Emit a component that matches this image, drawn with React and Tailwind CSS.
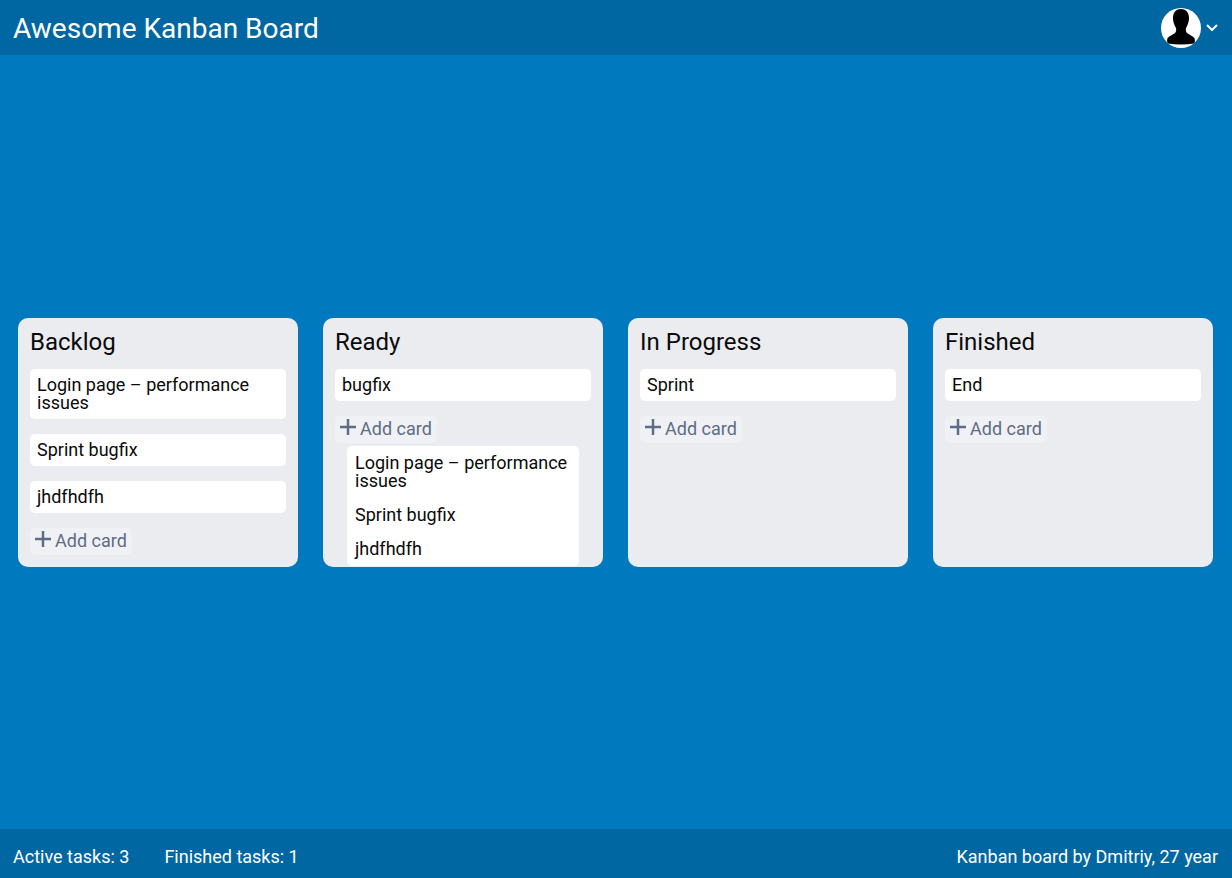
const columns = [
  { title: "Backlog", cards: ["Login page – performance issues", "Sprint bugfix", "jhdfhdfh"] },
  { title: "Ready", cards: ["bugfix"], dropdown: ["Login page – performance issues", "Sprint bugfix", "jhdfhdfh"] },
  { title: "In Progress", cards: ["Sprint"] },
  { title: "Finished", cards: ["End"] },
];

const Avatar = () => (
  <div className="w-10 h-10 rounded-full bg-white overflow-hidden">
    <svg viewBox="0 0 40 40" className="w-10 h-10">
      <path
        d="M20 1C14.500 1 12 5 12 10C12 14 13.500 17.500 15 20C15.500 22 15 24 14 25C12.500 26.500 8.500 27.500 6.500 30C6 32 6 33.500 6.500 35.500Q20 37.500 33.500 35.500C34 33.500 34 32 33.500 30C31.500 27.500 27.500 26.500 26 25C25 24 24.500 22 25 20C26.500 17.500 28 14 28 10C28 5 25.500 1 20 1Z"
        fill="#000"
      />
    </svg>
  </div>
);

const Column = ({ title, cards, dropdown }) => (
  <div className="flex-1 flex flex-col bg-[#ebecf0] rounded-[10px] p-3 text-[#0a0a0a]">
    <h2 className="text-[24px] leading-6 mb-[15px]">{title}</h2>
    <div className="flex flex-col gap-[15px]">
      {cards.map((card, index) => (
        <div key={index} className="bg-white rounded-[5px] p-[7px] text-[18px] leading-[18px]">
          {card}
        </div>
      ))}
    </div>
    <button className="self-start mt-[15px] h-[27px] w-[102px] flex items-center pl-[5px] pb-[2px] rounded-[5px] bg-[#f0f1f4] text-[18px] text-[#5e6c84]">
      <svg viewBox="0 0 16 16" className="w-4 h-4 mr-1 mb-[3px]">
        <path d="M8 0v16M0 8h16" stroke="#5e6c84" strokeWidth="2.500" />
      </svg>
      Add card
    </button>
    {dropdown && (
      <div className="mx-3 mt-[3px] mb-[-11px] pt-px bg-white rounded-[5px]">
        {dropdown.map((item, index) => (
          <div key={index} className="p-[7px] pl-2 mb-[2px] last:mb-px text-[18px] leading-[18px]">
            {item}
          </div>
        ))}
      </div>
    )}
  </div>
);

const App = () => {
  return (
    <div className="h-[878px] flex flex-col bg-[#0079bf] text-white font-['Roboto',sans-serif]">
      <header className="h-[55px] flex items-center justify-between pl-[13px] pr-[14px] bg-[#0067a3]">
        <h1 className="text-[28px] leading-none pt-[2px]">Awesome Kanban Board</h1>
        <div className="flex items-center gap-[5px]">
          <Avatar />
          <svg viewBox="0 0 12 7" className="w-3 h-[7px]" fill="none">
            <path d="M1 1l5 5 5-5" stroke="#fff" strokeWidth="2" />
          </svg>
        </div>
      </header>
      <main className="flex-1 flex items-center pl-[18px] pr-[19px] pt-px">
        <div className="w-full flex items-stretch gap-[25px]">
          {columns.map((column) => (
            <Column key={column.title} {...column} />
          ))}
        </div>
      </main>
      <footer className="h-[49px] flex items-center justify-between pl-[13px] pr-[14px] pt-[6px] bg-[#0067a3] text-[18px]">
        <div className="flex gap-[35px]">
          <span>Active tasks: 3</span>
          <span>Finished tasks: 1</span>
        </div>
        <span>Kanban board by Dmitriy, 27 year</span>
      </footer>
    </div>
  );
};

export default App;
